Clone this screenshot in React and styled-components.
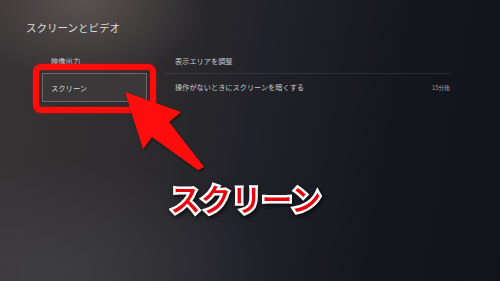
import React from "react";
import styled, { createGlobalStyle } from "styled-components";

const GlobalStyle = createGlobalStyle`
  html, body {
    margin: 0;
    padding: 0;
    background: #15161d;
  }
  body {
    font-family: "Noto Sans CJK JP", "Noto Sans", sans-serif;
  }
`;

export default function App() {
  return (
    <>
      <GlobalStyle />
      <Screen>
        <Title>スクリーンとビデオ</Title>
        <Body>
          <Menu>
            <MenuItem>映像出力</MenuItem>
            <MenuItem selected>
              スクリーン
              <Highlight />
            </MenuItem>
          </Menu>
          <Settings>
            <SettingRow first>
              <span>表示エリアを調整</span>
            </SettingRow>
            <Divider />
            <SettingRow>
              <span>操作がないときにスクリーンを暗くする</span>
              <Value>15分後</Value>
            </SettingRow>
          </Settings>
        </Body>

        <Arrow viewBox="0 0 500 281">
          <defs>
            <filter id="arrowShadow" x="-20%" y="-20%" width="140%" height="140%">
              <feDropShadow dx="1" dy="1.5" stdDeviation="1.5" floodColor="#000" floodOpacity="0.5" />
            </filter>
          </defs>
          <polygon
            points="125,92 181,112 169,122 204,167 198,170 152,137 143,149"
            fill="#ff0a0a"
            filter="url(#arrowShadow)"
          />
        </Arrow>

        <Caption>スクリーン</Caption>
      </Screen>
    </>
  );
}

// SCREEN

const Screen = styled.div`
  position: relative;
  width: 500px;
  height: 281px;
  overflow: hidden;
  box-sizing: border-box;
  padding: 20px 0 0 26px;
  color: #d6d6d6;
  background:
    radial-gradient(ellipse 120px 85px at 85px 0px, rgba(115, 106, 100, 0.6), transparent 100%),
    radial-gradient(ellipse 230px 110px at 50px 270px, rgba(72, 73, 80, 0.55), transparent 100%),
    linear-gradient(100deg, #383435 0%, #2e2c2e 28%, #202128 52%, #15171f 75%, #11131b 100%);
`;

const Title = styled.div`
  font-size: 10.5px;
  line-height: 16px;
  color: #dcdcdc;
`;

const Body = styled.div`
  display: flex;
  margin-top: 17px;
  margin-left: 16px;
  gap: 18px;
`;

// LEFT MENU

const Menu = styled.div`
  display: flex;
  flex-direction: column;
  width: 105px;
  gap: 4px;
`;

const MenuItem = styled.div`
  position: relative;
  box-sizing: border-box;
  display: flex;
  align-items: center;
  height: ${(p) => (p.selected ? "29px" : "16px")};
  padding-left: 8px;
  font-size: 7.3px;
  color: ${(p) => (p.selected ? "#dedede" : "#cfcfcf")};
  background: ${(p) => (p.selected ? "#3a3839" : "transparent")};
  border: 1px solid ${(p) => (p.selected ? "#6b6869" : "transparent")};
`;

const Highlight = styled.span`
  position: absolute;
  left: -10px;
  right: -10px;
  top: -10px;
  bottom: -12px;
  border: 6px solid #ff0d0d;
  border-radius: 8px;
  box-shadow: 0 0 3px rgba(255, 0, 0, 0.6), inset 0 0 2px rgba(255, 0, 0, 0.5);
  pointer-events: none;
`;

// RIGHT SETTINGS

const Settings = styled.div`
  display: flex;
  flex-direction: column;
  width: 285px;
`;

const SettingRow = styled.div`
  display: flex;
  align-items: center;
  justify-content: space-between;
  height: ${(p) => (p.first ? "16px" : "26px")};
  padding: 0 0 0 10px;
  font-size: 7.2px;
  color: #cacaca;
`;

const Divider = styled.div`
  height: 1px;
  margin-top: 4px;
  background: rgba(255, 255, 255, 0.09);
`;

const Value = styled.span`
  font-size: 5.8px;
  color: #9c9c9c;
`;

// ANNOTATIONS

const Arrow = styled.svg`
  position: absolute;
  left: 0;
  top: 0;
  width: 500px;
  height: 281px;
  pointer-events: none;
`;

const Caption = styled.div`
  position: absolute;
  left: 170px;
  top: 176px;
  font-size: 31px;
  font-weight: 500;
  line-height: 44px;
  color: #e8000c;
  -webkit-text-stroke: 5px #ffffff;
  paint-order: stroke fill;
  filter: drop-shadow(1px 2px 2px rgba(0, 0, 0, 0.7));
  letter-spacing: -0.5px;
`;
